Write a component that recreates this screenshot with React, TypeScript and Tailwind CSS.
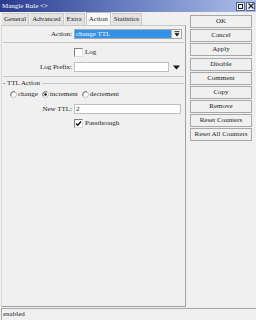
import React from 'react';

const tabs = ['General', 'Advanced', 'Extra', 'Action', 'Statistics'];

const buttons = [
  'OK',
  'Cancel',
  'Apply',
  'Disable',
  'Comment',
  'Copy',
  'Remove',
  'Reset Counters',
  'Reset All Counters',
];

const CheckBox = ({ checked }: { checked?: boolean }) => (
  <div className="w-[9px] h-[9px] bg-white border border-t-[#808080] border-l-[#808080] border-r-[#dcdcdc] border-b-[#dcdcdc] flex items-center justify-center">
    {checked && (
      <svg width="7" height="7" viewBox="0 0 7 7">
        <path d="M1 3.5 L2.8 5.3 L6 1.5" stroke="#111" strokeWidth="1.4" fill="none" />
      </svg>
    )}
  </div>
);

const Radio = ({ selected }: { selected?: boolean }) => (
  <svg width="7" height="7" viewBox="0 0 7 7" className="shrink-0">
    <circle cx="3.5" cy="3.5" r="3" fill="#fff" stroke="#b0b0b0" strokeWidth="0.8" />
    <path d="M1 5 A3 3 0 0 1 5 1" stroke="#606060" strokeWidth="0.9" fill="none" />
    {selected && <circle cx="3.5" cy="3.5" r="1.3" fill="#111" />}
  </svg>
);

export default function App() {
  return (
    <div className="w-[256px] h-[320px] bg-[#f0f0f0] flex flex-col overflow-hidden text-[7px] leading-none text-[#1c1c1c] [font-family:'Liberation_Serif',serif]">
      {/* title bar */}
      <div className="h-[12px] shrink-0 flex items-center bg-gradient-to-r from-[#2c3c90] via-[#6a7ec0] to-[#aec0ea] pl-[2px] pr-[1px]">
        <span className="text-white text-[7px]">Mangle Rule &lt;&gt;</span>
        <div className="ml-auto flex gap-[1px]">
          <div className="w-[9px] h-[9px] bg-[#eef0f8] border border-[#5a6490] flex items-center justify-center">
            <div className="w-[5px] h-[5px] border border-[#222]" />
          </div>
          <div className="w-[9px] h-[9px] bg-[#eef0f8] border border-[#5a6490] flex items-center justify-center">
            <svg width="6" height="6" viewBox="0 0 6 6">
              <path d="M0.5 0.5 L5.5 5.5 M5.5 0.5 L0.5 5.5" stroke="#222" strokeWidth="1.2" />
            </svg>
          </div>
        </div>
      </div>

      <div className="flex flex-1 min-h-0">
        {/* left panel */}
        <div className="w-[186px] flex flex-col pl-[1px] pb-[1px]">
          <div className="h-[13px] flex items-end pl-[1px]">
            {tabs.map((t) =>
              t === 'Action' ? (
                <div
                  key={t}
                  className="h-[13px] px-[2px] mr-[1px] flex items-center bg-[#f8f8f8] border-t border-x border-[#c0c0c0]"
                >
                  {t}
                </div>
              ) : (
                <div
                  key={t}
                  className="h-[12px] px-[2px] mr-[1px] flex items-center bg-[#e2e2e2] border-t border-r border-[#cacaca]"
                >
                  {t}
                </div>
              )
            )}
          </div>

          <div className="flex-1 border-l border-r border-b border-l-[#d8d8d8] border-r-[#a0a0a0] border-b-[#a0a0a0] border-t border-t-[#c8c8c8] flex flex-col">
            {/* Action */}
            <div className="mt-[3px] h-[10px] flex items-center">
              <div className="w-[70px] text-right">Action:</div>
              <div className="ml-[2px] w-[108px] h-[10px] flex bg-white border border-[#a8a8a8]">
                <div className="flex-1 bg-[#3391e8] text-white flex items-center pl-[1px]">change TTL</div>
                <div className="w-[10px] border-l border-[#b0b0b0] bg-[#f4f4f4] flex items-center justify-center">
                  <svg width="6" height="6" viewBox="0 0 6 6">
                    <path d="M0.5 0.7 H5.5" stroke="#111" strokeWidth="0.9" />
                    <path d="M0.5 2.2 H5.5 L3 5.5 Z" fill="#111" />
                  </svg>
                </div>
              </div>
            </div>

            <div className="mt-[3px] mx-[1px] h-[1px] bg-[#c4c4c4]" />

            {/* Log */}
            <div className="mt-[4px] h-[10px] flex items-center">
              <div className="w-[72px]" />
              <CheckBox />
              <span className="ml-[2px]">Log</span>
            </div>

            {/* Log Prefix */}
            <div className="mt-[5px] h-[10px] flex items-center">
              <div className="w-[70px] text-right">Log Prefix:</div>
              <div className="ml-[2px] w-[95px] h-[10px] bg-white border border-[#c0c0c0]" />
              <svg width="7" height="5" viewBox="0 0 7 5" className="ml-[4px]">
                <path d="M0 0.5 H7 L3.5 4.5 Z" fill="#111" />
              </svg>
            </div>

            <div className="mt-[4px] mx-[1px] h-[1px] bg-[#c4c4c4]" />

            {/* TTL Action group */}
            <div className="mt-[1px] h-[10px] flex items-center pl-[1px] pr-[1px]">
              <span>- TTL Action</span>
              <div className="ml-[2px] flex-1 h-[1px] bg-[#c4c4c4]" />
            </div>

            <div className="mt-[1px] h-[10px] flex items-center pl-[8px]">
              <Radio />
              <span className="ml-[1px]">change</span>
              <span className="ml-[4px]">
                <Radio selected />
              </span>
              <span className="ml-[1px]">increment</span>
              <span className="ml-[4px]">
                <Radio />
              </span>
              <span className="ml-[1px]">decrement</span>
            </div>

            <div className="mt-[5px] h-[10px] flex items-center">
              <div className="w-[70px] text-right">New TTL:</div>
              <div className="ml-[2px] w-[107px] h-[10px] bg-white border border-[#c0c0c0] flex items-center pl-[1px]">2</div>
            </div>

            <div className="mt-[4px] h-[10px] flex items-center">
              <div className="w-[72px]" />
              <CheckBox checked />
              <span className="ml-[2px]">Passthrough</span>
            </div>
          </div>
        </div>

        {/* buttons */}
        <div className="ml-[4px] w-[62px] pt-[3px] flex flex-col gap-[1px]">
          {buttons.map((b) => (
            <div
              key={b}
              className={`h-[13px] flex items-center justify-center bg-[#f0f0f0] border border-[#a8a8a8] ${
                b === 'Disable' ? 'mt-[1px]' : ''
              }`}
            >
              {b}
            </div>
          ))}
        </div>
      </div>

      {/* status bar */}
      <div className="h-[12px] shrink-0 ml-[1px] border-t border-l border-[#a8a8a8] flex items-center pl-[1px]">
        enabled
      </div>
    </div>
  );
}
